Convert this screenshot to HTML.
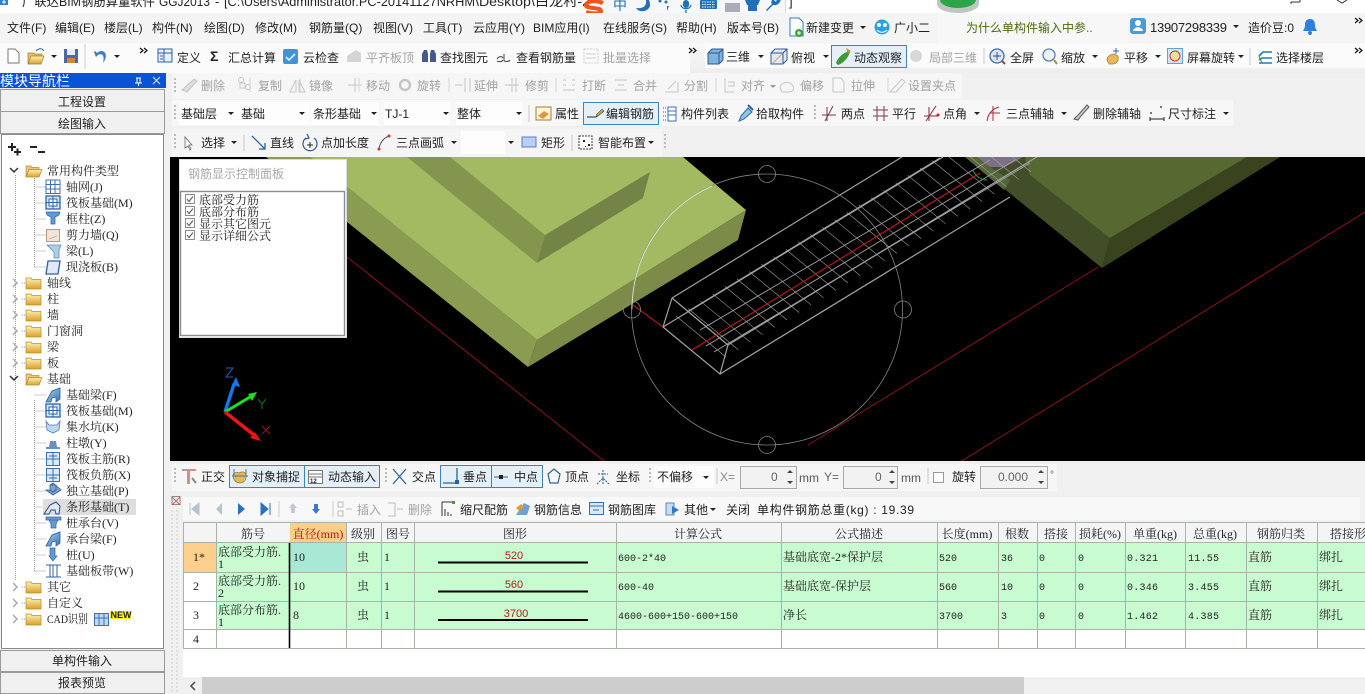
<!DOCTYPE html>
<html lang="zh"><head><meta charset="utf-8"><title>广联达BIM钢筋算量软件</title>
<style>
html,body{margin:0;padding:0;background:#f0f0f0;overflow:hidden}
svg{display:block}
text{font:12px "Liberation Sans","Noto Sans CJK SC",sans-serif;fill:#222}
.g text,text.g{fill:#a2a2a2}
.s text,text.s{font-family:"Liberation Serif","Noto Serif CJK SC",serif}
.c text,text.c{text-anchor:middle}
.m text{font:10px "Liberation Mono","Noto Serif CJK SC",monospace;fill:#222}
</style></head><body>
<svg xmlns="http://www.w3.org/2000/svg" width="1365" height="694" viewBox="0 0 1365 694">
<defs>
<linearGradient id="fy" x1="0" y1="0" x2="0" y2="1"><stop offset="0" stop-color="#fff2b0"/><stop offset="1" stop-color="#d9a030"/></linearGradient>
<linearGradient id="bb" x1="0" y1="0" x2="0" y2="1"><stop offset="0" stop-color="#f8f8f8"/><stop offset="1" stop-color="#eeeeee"/></linearGradient>
<linearGradient id="bl" x1="0" y1="0" x2="1" y2="1"><stop offset="0" stop-color="#a9cdea"/><stop offset="1" stop-color="#3f78b4"/></linearGradient>
<g id="fc"><path d="M0 2h5l1 1.500h9v9.500h-15z" fill="url(#fy)" stroke="#b98a30" stroke-width=".7"/></g>
<g id="fo"><path d="M0 2h5l1 1.500h7v2h-10l-3 7.500z" fill="#e8c878" stroke="#b98a30" stroke-width=".7"/><path d="M3 5.500h13l-3 7.500h-13z" fill="url(#fy)" stroke="#b98a30" stroke-width=".7"/></g>
<path id="ex" d="M0 0l4 4-4 4" fill="none" stroke="#aaa" stroke-width="1.500"/>
<path id="eo" d="M0 0l4 4 4-4" fill="none" stroke="#333" stroke-width="1.500"/>
<path id="dn" d="M0 0h6l-3 3z" fill="#222"/>
<g id="ck"><rect x=".5" y=".5" width="9" height="9" fill="#fff" stroke="#8c8c8c"/><path d="M2 5l2 2.500 4-5" fill="none" stroke="#666" stroke-width="1.200"/></g>
<g id="grid"><path d="M0 0h14M0 4.500h14M0 9h14M0 13.500h14M0 0v14M4.500 0v14M9 0v14M14 0v14" fill="none" stroke="#3f6fb0"/></g>
<g id="raft"><rect x="0" y="0" width="14" height="13" fill="#dbe9f8" stroke="#2f62a8" stroke-width="1.300"/><rect x="3" y="3" width="8" height="7" fill="#fff" stroke="#2f62a8"/><path d="M7 0v13M0 6.500h14" stroke="#2f62a8"/></g>
<g id="beam"><path d="M0 14l6-11 8-3v11l-4 3v-5l-4 1-1 4z" fill="url(#bl)" stroke="#2d5d9f" stroke-width=".8"/></g>
</defs>

<rect width="1365" height="694" fill="#f0f0f0"/>

<!-- 3D VIEW -->
<svg x="170" y="157" width="1195" height="304" viewBox="170 157 1195 304">
<rect x="170" y="157" width="1195" height="304" fill="#000"/>
<g fill="none" stroke="#8c1414" stroke-width="1">
<path d="M347 257L604 461"/><path d="M1098 267L808 445"/><path d="M1365 212L960 462"/>
</g>
<polygon points="310,157 683,157 746,210 537,340 347,187" fill="#a3ba62"/>
<polygon points="266,157 310,157 537,340 528,367" fill="#8a9c52"/>
<polygon points="537,340 746,210 738,240 528,367" fill="#7c8c48"/>
<polygon points="407,157 450,157 545,235 537,263" fill="#84954d"/>
<polygon points="545,235 650,172 643,198 537,263" fill="#748346"/>
<!-- right block -->
<polygon points="965,157 1025,157 1110,238 1102,268" fill="#414e28"/>
<polygon points="1247,157 1280,157 1102,268 1110,238" fill="#39441f"/>
<polygon points="1025,157 1247,157 1110,238 1030,175" fill="#586831"/>
<polygon points="977,157 1023,157 1005,167 990,167" fill="#7d7085"/>
<polygon points="965,157 977,157 990,167 1010,180 1004,190" fill="#55663a"/>
<!-- wireframe -->
<g fill="none" stroke="#a2a2a2">
<path stroke-width="1.200" d="M672 298L902 157M663 327L943 157M720 374L1010 197M728 345L1040 155M687 312L940 158"/>
<path stroke-width="1.200" d="M672 298L663 327L720 374L728 345L672 298"/>
<path stroke-width=".6" d="M676 316l50 41m-37.800-48.400l50 41m-37.800-48.400l50 41m-37.800-48.400l50 41m-37.800-48.400l50 41m-37.800-48.400l50 41m-37.800-48.400l50 41m-37.800-48.400l50 41m-37.800-48.400l50 41m-37.800-48.400l50 41m-37.800-48.400l50 41m-37.800-48.400l50 41m-37.800-48.400l50 41m-37.800-48.400l50 41m-37.800-48.400l50 41m-37.800-48.400l50 41m-37.800-48.400l50 41m-37.800-48.400l50 41m-37.800-48.400l50 41m-37.800-48.400l50 41m-37.800-48.400l50 41m-37.800-48.400l50 41m-37.800-48.400l50 41m-37.800-48.400l50 41m-37.800-48.400l50 41m-37.800-48.400l50 41"/>
<path stroke-width=".9" d="M706 346L1015 160M714 352L1030 163M700 330L990 160"/>
</g>
<path d="M692 350L980 173" stroke="#c81616" stroke-width="1.100" fill="none"/>
<path d="M633 305L663 327" stroke="#d81818" stroke-width="1" fill="none"/>
<path d="M973 170a15 15 0 0 0 14 10" stroke="#1a9a40" fill="none"/>
<!-- circle gizmo -->
<g fill="none" stroke="#858585" stroke-width=".8">
<circle cx="767" cy="309.500" r="135.500"/>
<circle cx="767" cy="174" r="8.500"/><circle cx="767" cy="445" r="8.500"/><circle cx="632" cy="309.500" r="8.500"/><circle cx="903" cy="309.500" r="8.500"/>
</g>
<path d="M632 309A135.500 135.500 0 0 1 712 186" fill="none" stroke="#e8ecd8" stroke-width=".8"/>
<!-- axes -->
<path d="M225 412L234 384" stroke="#1478ec" stroke-width="3.500"/><path d="M236 377l4 10-8-2z" fill="#1478ec"/>
<path d="M225 412L250 397" stroke="#1ce01c" stroke-width="3"/><path d="M257 392l-5 9-4-7z" fill="#1ce01c"/>
<path d="M225 412L254 435" stroke="#ee1414" stroke-width="3.500"/><path d="M261 441l-11-3 5-6z" fill="#ee1414"/>
<path d="M226 368h7l-7 9h7" fill="none" stroke="#2c5cb0"/>
<path d="M258 399l4 5 4-5M262 404v5" fill="none" stroke="#128012"/>
<path d="M262 426l8 8M270 426l-8 8" fill="none" stroke="#902020"/>
</svg>

<!-- title bar -->
<rect x="0" y="0" width="1365" height="13" fill="#fff"/>
<rect x="0" y="0" width="8" height="5" fill="#2a82d8"/><path d="M4 0v4M2 2h4" stroke="#fff"/>
<g style="fill:#333">
<text x="22" y="6" style="font-size:13px" textLength="133" lengthAdjust="spacingAndGlyphs">广联达BIM钢筋算量软件</text>
<text x="159" y="6" style="font-size:13px" textLength="51" lengthAdjust="spacingAndGlyphs">GGJ2013</text>
<text x="215" y="6" style="font-size:13px">-</text>
<text x="224" y="6" style="font-size:13px" textLength="251" lengthAdjust="spacingAndGlyphs">[C:\Users\Administrator.PC-20141127NRHM</text>
<text x="475" y="6" style="font-size:13px" textLength="115" lengthAdjust="spacingAndGlyphs">\Desktop\白龙村-2</text>
</g>
<!-- sogou -->
<rect x="600" y="-1" width="185.500" height="16" fill="#f6f7f8" stroke="#d8d8d8"/>
<text x="789" y="6" style="font-size:13px">]</text>
<path d="M603 3c-7-3-16-2-17 2-1 4 15 2 15 6 0 3-9 3-15 1" fill="none" stroke="#f0551e" stroke-width="4"/>
<g fill="#1f70b8"><text x="613" y="10" style="font-size:14px;fill:#1f70b8">中</text>
<path d="M646 0c1 6-3 9-10 8 3 5 12 4 14-2 0-2 0-4-1-6z"/>
<circle cx="660" cy="1" r="1.500"/><circle cx="666" cy="2" r="1.500"/><path d="M667 6l2 0-2 5z"/>
<rect x="683" y="0" width="6" height="8" rx="3"/><path d="M681 5c1 5 9 5 10 0M686 10v3" fill="none" stroke="#1f70b8" stroke-width="1.300"/>
<rect x="700" y="0" width="17" height="9" rx="1" fill="#1f70b8"/><path d="M702 2h13M702 4.500h13M702 7h13" stroke="#fff" stroke-dasharray="1.500 1"/>
<rect x="725" y="3" width="15" height="9" fill="#a8aeb4"/>
<path d="M745 0h15l-2 5h-1v6h-9v-6h-1z"/>
<path d="M767 11l6-6c3 1 7-1 8-6h-4l-1 3-2-2h-2c-1 2-1 3 0 4l-6 6z"/></g>
<!-- green ball -->
<path d="M937 4a21 9 0 0 0 42 0v-4h-42z" fill="#bfc6bf"/><path d="M940 0a17 7.500 0 0 0 36 0z" fill="#2ea44a"/>
<path d="M1291 2h9M1291 2v2M1300 0v2" stroke="#333" fill="none"/><path d="M1337 0l5 3 5-3" stroke="#333" fill="none"/>

<!-- menu row -->
<rect x="0" y="13" width="1365" height="30" fill="#f4f4f4"/>
<rect x="938" y="13" width="190" height="30" fill="#f7f7f7"/>
<g>
<text x="7" y="32">文件(F)</text><text x="55" y="32">编辑(E)</text><text x="104" y="32">楼层(L)</text><text x="152" y="32">构件(N)</text><text x="204" y="32">绘图(D)</text><text x="255" y="32">修改(M)</text><text x="309" y="32">钢筋量(Q)</text><text x="373" y="32">视图(V)</text><text x="423" y="32">工具(T)</text><text x="473" y="32">云应用(Y)</text><text x="533" y="32">BIM应用(I)</text><text x="603" y="32">在线服务(S)</text><text x="676" y="32">帮助(H)</text><text x="727" y="32">版本号(B)</text><text x="806" y="32">新建变更</text><text x="894" y="32">广小二</text>
<text x="966" y="32" style="fill:#4a6b10">为什么单构件输入中参..</text>
<text x="1150" y="32" style="font-size:13px" textLength="77">13907298339</text><text x="1248" y="32">造价豆:0</text>
</g>
<path d="M790 18h9l4 4v14h-13z" fill="#fff" stroke="#3a78b8"/><circle cx="799" cy="33" r="4" fill="#3aa83a"/><path d="M797 33h4M799 31v4" stroke="#fff"/>
<use href="#dn" x="860" y="26"/>
<circle cx="882" cy="27" r="7.500" fill="#28a0e8"/><circle cx="879" cy="25" r="2" fill="#fff"/><circle cx="885" cy="25" r="2" fill="#fff"/><path d="M877 30c3 3 7 3 10 0" stroke="#fff" fill="none"/>
<rect x="1130" y="18" width="16" height="16" rx="3" fill="#4a9ad4"/><circle cx="1138" cy="23" r="3" fill="#fff"/><path d="M1133 31c1-5 9-5 10 0z" fill="#fff"/>
<use href="#dn" x="1233" y="25"/>
<path d="M1310 19c4 0 5 3 5 6 0 3 1 4 2 6h-14c1-2 2-3 2-6 0-3 1-6 5-6z" fill="#2e80e0"/><circle cx="1310" cy="33" r="2" fill="#2e80e0"/>
<path d="M1355 18l3 2.500-3 2.500M1359 18l3 2.500-3 2.500" fill="none" stroke="#111" stroke-width="1.200"/>

<!-- row 2 -->
<rect x="0" y="43" width="1365" height="30" fill="url(#bb)"/>
<rect x="0" y="44" width="690" height="29" fill="#fbfbfb"/><rect x="705" y="44" width="660" height="24" fill="#fbfbfb"/>
<path d="M8 49h7l4 4v10h-11z" fill="#fff" stroke="#777"/>
<path d="M28 53h6l1 1h7v2h-10l-4 7z" fill="#e6c26c" stroke="#a87a28" stroke-width=".7"/><path d="M31 56h13l-3 8h-13z" fill="url(#fy)" stroke="#a87a28" stroke-width=".7"/><path d="M36 51c3-3 6-3 8 0" stroke="#2a62a8" fill="none"/>
<use href="#dn" x="51" y="55"/>
<rect x="64" y="49" width="14" height="14" fill="#4d66a8"/><rect x="67" y="49" width="8" height="6" fill="#e8edf5"/><rect x="67" y="58" width="8" height="5" fill="#c83" />
<line x1="85" y1="44" x2="85" y2="69" stroke="#ccc"/>
<path d="M94 52l2 5 2-2c4-2 7 0 5 8 4-5 4-11-1-12-2 0-4 1-5 2l-2-2z" fill="#3b7bc8"/>
<use href="#dn" x="114" y="55"/>
<path d="M140 48l3 2.500-3 2.500M144 48l3 2.500-3 2.500" fill="none" stroke="#111" stroke-width="1.200"/>
<rect x="158" y="49" width="14" height="13" fill="#e8f0f8" stroke="#315f9c"/><path d="M158 53h14M164 49v13M160 56h3M160 59h3" stroke="#315f9c"/>
<text x="177" y="62">定义</text>
<text x="210" y="61" style="font-size:14px;font-weight:bold">Σ</text><text x="228" y="62">汇总计算</text>
<rect x="283" y="49" width="15" height="15" rx="2" fill="#3d96dc"/><path d="M286 57l3 3 6-6" stroke="#fff" stroke-width="1.500" fill="none"/><text x="303" y="62">云检查</text>
<path d="M347 62v-6l9-6 5 3v9z" fill="#d4d4d4"/><text x="366" y="62" class="g">平齐板顶</text>
<path d="M422 62v-8l2-4h3l1 4v8zM430 62v-8l1-4h3l2 4v8z" fill="#445a8c"/><text x="440" y="62">查找图元</text>
<path d="M497 59c2-3 5-3 6-1M504 54v6c0 2 5 2 6 0M497 61c2 1 5 1 6-1" stroke="#444" fill="none"/><text x="516" y="62">查看钢筋量</text>
<rect x="584" y="49" width="14" height="14" fill="none" stroke="#ccc" stroke-dasharray="2 1"/><path d="M586 54h10M586 58h10" stroke="#ccc"/><text x="603" y="62" class="g">批量选择</text>
<path d="M689 48l3 2.500-3 2.500M693 48l3 2.500-3 2.500" fill="none" stroke="#111" stroke-width="1.200"/>
<path d="M708 53l4-4h11v11l-4 4h-11z" fill="#7eb2dc" stroke="#2f5c8c"/><path d="M708 53h11v11M719 53l4-4" fill="none" stroke="#2f5c8c"/><text x="726" y="61">三维</text><use href="#dn" x="758" y="55"/>
<path d="M771 53l4-4h12v11l-4 4h-12z" fill="#dde9f4" stroke="#2f5c8c"/><path d="M771 53h12v11M783 53l4-4" fill="none" stroke="#2f5c8c"/><path d="M773 63l9-9" stroke="#e0a060"/><text x="791" y="62">俯视</text><use href="#dn" x="823" y="55"/>
<rect x="831.500" y="45.500" width="75" height="22" fill="#e4eff8" stroke="#3c84b8"/>
<path d="M836 63c2-6 8-11 14-12-1 6-6 12-12 14z" fill="#3f9a34"/><path d="M846 48l5 3-3 2z" fill="#d08a24"/><text x="854" y="62">动态观察</text>
<circle cx="916" cy="56" r="6" fill="#d8d8d8"/><text x="929" y="62" class="g">局部三维</text>
<line x1="984" y1="48" x2="984" y2="64" stroke="#c8c8c8"/>
<circle cx="997" cy="56" r="7" fill="#dbe6f4" stroke="#3d6ba8" stroke-width="1.300"/><path d="M993 56h8M997 52v8" stroke="#284f88"/><path d="M1002 61l3 3" stroke="#b03a2a" stroke-width="2"/><text x="1010" y="62">全屏</text>
<circle cx="1049" cy="55" r="6" fill="#eef3f8" stroke="#5b7fa8" stroke-width="1.300"/><path d="M1054 60l3 4" stroke="#b58a34" stroke-width="2"/><text x="1061" y="62">缩放</text><use href="#dn" x="1092" y="55"/>
<path d="M1107 60c0-4 4-6 7-6l4 2c1 4-1 8-5 8h-4z" fill="#e8b85c" stroke="#a47a2c" stroke-width=".7"/><path d="M1116 48v6M1113 51h6" stroke="#3a62a8"/><text x="1124" y="62">平移</text><use href="#dn" x="1155" y="55"/>
<rect x="1167.500" y="48.500" width="15" height="15" fill="#cfe6f4" stroke="#6aa0c8"/><circle cx="1175" cy="56" r="5" fill="#e8e0a0" stroke="#cc3a2c"/><text x="1187" y="62">屏幕旋转</text><use href="#dn" x="1238" y="55"/>
<line x1="1250" y1="48" x2="1250" y2="65" stroke="#c8c8c8"/>
<path d="M1259 56l4-4h9M1259 60l3-2h10M1259 63h13" fill="none" stroke="#1f7fb0" stroke-width="1.600"/><path d="M1259 56l3 7" stroke="#3a9a38"/><text x="1276" y="62">选择楼层</text>
<path d="M1355 48l3 2.500-3 2.500M1359 48l3 2.500-3 2.500" fill="none" stroke="#111" stroke-width="1.200"/>

<!-- row 3 (disabled) -->
<rect x="170" y="73" width="1195" height="84" fill="#f0f0f0"/>
<rect x="172" y="73" width="790" height="26" fill="#f6f6f6"/>
<line x1="175" y1="78" x2="175" y2="94" stroke="#bbb" stroke-width="2" stroke-dasharray="2 2"/>
<g class="g">
<text x="201" y="90">删除</text><text x="258" y="90">复制</text><text x="309" y="90">镜像</text><text x="366" y="90">移动</text><text x="417" y="90">旋转</text><text x="474" y="90">延伸</text><text x="525" y="90">修剪</text><text x="582" y="90">打断</text><text x="633" y="90">合并</text><text x="684" y="90">分割</text><text x="741" y="90">对齐</text><text x="800" y="90">偏移</text><text x="851" y="90">拉伸</text><text x="908" y="90">设置夹点</text>
</g>
<g fill="none" stroke="#c6c6c6">
<path d="M182 90l12-11 3 2-10 11z" fill="#ddd"/>
<circle cx="241" cy="80" r="2.500"/><circle cx="248" cy="87" r="2.500"/><rect x="240" y="83" width="5" height="5"/>
<path d="M290 92l6-12v12zM299 92v-12l6 12z"/>
<path d="M348 85h14M355 78v14"/>
<circle cx="405" cy="85" r="5" stroke-width="2.500"/>
<path d="M455 85h8M465 78v14M470 78v14"/>
<path d="M505 85h14M512 78v14M516 78v14"/>
<path d="M563 80h3M572 80h3M563 90h12M563 85h3M572 85h3"/>
<path d="M615 80h12M615 90h12M618 85h6"/>
<path d="M665 92h13v-10M668 89l8-8"/>
<path d="M725 78v14h9M728 82h6v4h-6"/>
<path d="M780 88c0-6 10-8 13-2 2 4-1 6-5 6h-6z"/>
<path d="M833 78h8l3 4v10h-11z"/>
<path d="M890 92l12-13 3 3-9 10z"/>
<path d="M216 78v14M250 78v14M300 78v14M359 78v14M449 78v14M556 78v14M716 78v14M888 78v14" stroke="#d4d4d4"/>
</g>
<path d="M770 85h6l-3 3z" fill="#999"/>

<!-- row 4 -->
<rect x="172" y="100" width="1061" height="26" fill="#f7f7f7"/>
<rect x="179" y="102" width="62" height="23" fill="#fdfdfd"/><rect x="240" y="102" width="70" height="23" fill="#fdfdfd"/><rect x="311" y="102" width="68" height="23" fill="#fdfdfd"/><rect x="384" y="102" width="66" height="23" fill="#fdfdfd"/><rect x="456" y="102" width="66" height="23" fill="#fdfdfd"/>
<line x1="175" y1="105" x2="175" y2="121" stroke="#bbb" stroke-width="2" stroke-dasharray="2 2"/>
<text x="181" y="118">基础层</text><use href="#dn" x="228" y="112"/><text x="241" y="118">基础</text><use href="#dn" x="299" y="112"/><text x="313" y="118">条形基础</text><use href="#dn" x="371" y="112"/><text x="385" y="118">TJ-1</text><use href="#dn" x="443" y="112"/><text x="457" y="118">整体</text><use href="#dn" x="516" y="112"/>
<line x1="529" y1="105" x2="529" y2="122" stroke="#c8c8c8"/>
<rect x="536" y="107" width="15" height="13" fill="#fff4d8" stroke="#a87a2c"/><path d="M538 116l6-5 5 3-6 5z" fill="#d89c3c"/><text x="555" y="118">属性</text>
<rect x="583.500" y="102.500" width="75" height="22" fill="#e4eff8" stroke="#3c84b8"/>
<path d="M587 117h9l8-6" stroke="#222" fill="none"/><path d="M596 115l6-6 2 2-6 5z" fill="#c8a040" stroke="#333" stroke-width=".5"/><text x="606" y="118">编辑钢筋</text>
<path d="M663 108h3M663 112h3M663 116h3M663 120h3" stroke="#456" stroke-dasharray="1 1" /><rect x="668" y="107" width="8" height="14" fill="#fff" stroke="#3f6fa8"/><path d="M668 111h8M668 115h8" stroke="#3f6fa8"/><text x="681" y="118">构件列表</text>
<path d="M739 121l2-5 7-8 4 4-8 7z" fill="#8cc4ec" stroke="#2a62a0"/><path d="M748 105l5 5" stroke="#2a62a0" stroke-width="2"/><text x="756" y="118">拾取构件</text>
<line x1="815" y1="105" x2="815" y2="121" stroke="#bbb" stroke-width="2" stroke-dasharray="2 2"/>
<g fill="none" stroke="#7c3a4a"><path d="M822 115h14M827 107v14M833 106l-8 15"/></g><text x="841" y="118">两点</text>
<g fill="none" stroke="#7c3a4a"><path d="M873 110h15M873 116h15M877 106v15M884 106v15"/></g><text x="892" y="118">平行</text>
<g fill="none" stroke="#8c2a3c"><path d="M924 116h14M929 107v14M936 106l-10 15"/></g><circle cx="938" cy="115" r="1.500" fill="#c22"/><text x="943" y="118">点角</text><use href="#dn" x="974" y="112"/>
<path d="M987 121c1-7 5-12 12-14M993 106v15M990 113h10" fill="none" stroke="#a82a3c"/><text x="1006" y="118">三点辅轴</text><use href="#dn" x="1061" y="112"/>
<path d="M1074 119l5-5 8-9 2 2-8 9-3 4z" fill="#d8c8a0" stroke="#4a5a90"/><text x="1093" y="118">删除辅轴</text>
<path d="M1150 119h14M1150 117v4M1164 117v4" stroke="#222" fill="none"/><rect x="1160" y="106" width="2" height="2" fill="#4a9a3c"/><rect x="1150" y="112" width="2" height="2" fill="#4a9a3c"/><text x="1168" y="118">尺寸标注</text><use href="#dn" x="1223" y="112"/>

<!-- row 5 -->
<rect x="172" y="129" width="490" height="28" fill="#f5f5f5"/>
<line x1="175" y1="134" x2="175" y2="150" stroke="#bbb" stroke-width="2" stroke-dasharray="2 2"/>
<path d="M185 137v11l3-2 2 4 1-1-2-4h3z" fill="#fff" stroke="#666" stroke-width=".8"/><text x="201" y="147">选择</text><use href="#dn" x="231" y="141"/>
<line x1="244" y1="135" x2="244" y2="151" stroke="#c8c8c8"/>
<path d="M252 136l13 13M265 143v6h-6" stroke="#2a62a0" fill="none" stroke-width="1.300"/><text x="270" y="147">直线</text>
<path d="M306 138a7 7 0 1 0 8 0M307 134l2 4-4 1" fill="none" stroke="#2a5a98" stroke-width="1.200"/><path d="M310 142v6M307 145h6" stroke="#222"/><text x="321" y="147">点加长度</text>
<path d="M379 149c1-7 5-11 10-13" stroke="#555" fill="none"/><circle cx="379" cy="149" r="1.500" fill="#c33"/><circle cx="389" cy="136" r="1.500" fill="#c33"/><text x="396" y="147">三点画弧</text><use href="#dn" x="451" y="141"/>
<rect x="461" y="131" width="44" height="23" fill="#fdfdfd"/><use href="#dn" x="508" y="141"/>
<rect x="522" y="137" width="14" height="10" fill="#b8cef4" stroke="#5a80b8"/><text x="541" y="147">矩形</text>
<line x1="572" y1="135" x2="572" y2="151" stroke="#c8c8c8"/>
<rect x="579" y="136" width="13" height="13" fill="#fff" stroke="#333" stroke-dasharray="2 1"/><path d="M583 140h2v2h-2zM588 144h2v2h-2zM585 146h1v1h-1z" fill="#222"/><text x="598" y="147">智能布置</text><use href="#dn" x="648" y="141"/>
<line x1="665" y1="134" x2="665" y2="150" stroke="#bbb" stroke-width="2" stroke-dasharray="2 2"/>

<!-- left panel -->
<rect x="0" y="73" width="166" height="15" fill="#0a53d6"/>
<text x="0" y="86" style="font-size:14px;fill:#fff">模块导航栏</text>
<path d="M136 78h5M137 78v5h3v-5M135 83h7M138.500 83v3" stroke="#fff" fill="none"/><path d="M153 77l7 7M160 77l-7 7" stroke="#dfe8ff"/>
<rect x="0.500" y="89.500" width="164" height="22" fill="#f0f0f0" stroke="#9a9a9a"/>
<rect x="0.500" y="111.500" width="164" height="22" fill="#f0f0f0" stroke="#9a9a9a"/>
<text x="82" y="106" class="c">工程设置</text><text x="82" y="128" class="c">绘图输入</text>
<rect x="1.500" y="134.500" width="162" height="514" fill="#fff" stroke="#8a8a8a"/>
<path d="M8 147h8M12 143v8M14 152h7M17.500 148.500v7" stroke="#222" stroke-width="2" fill="none"/><path d="M30 147h7M38 152h7" stroke="#222" stroke-width="2" fill="none"/>
<!-- tree lines -->
<g fill="none" stroke="#999" stroke-dasharray="1 1">
<path d="M15.500 175V580M34.500 178V267H46M34.500 187H46M34.500 203H46M34.500 219H46M34.500 235H46M34.500 251H46M34.500 400V571H46M34.500 395H46M34.500 411H46M34.500 427H46M34.500 443H46M34.500 459H46M34.500 475H46M34.500 491H46M34.500 507H46M34.500 523H46M34.500 539H46M34.500 555H46"/>
<path d="M22 283h4M22 299h4M22 315h4M22 331h4M22 347h4M22 363h4M22 587h4M22 603h4M22 619h4"/>
</g>
<rect x="43" y="499" width="93" height="16" fill="#dedede"/>
<!-- expanders & folders -->
<use href="#eo" x="10" y="168"/><use href="#fo" x="26" y="164"/>
<use href="#ex" x="13" y="279"/><use href="#fc" x="26" y="276"/>
<use href="#ex" x="13" y="295"/><use href="#fc" x="26" y="292"/>
<use href="#ex" x="13" y="311"/><use href="#fc" x="26" y="308"/>
<use href="#ex" x="13" y="327"/><use href="#fc" x="26" y="324"/>
<use href="#ex" x="13" y="343"/><use href="#fc" x="26" y="340"/>
<use href="#ex" x="13" y="359"/><use href="#fc" x="26" y="356"/>
<use href="#eo" x="10" y="376"/><use href="#fo" x="26" y="372"/>
<use href="#ex" x="13" y="583"/><use href="#fc" x="26" y="580"/>
<use href="#ex" x="13" y="599"/><use href="#fc" x="26" y="596"/>
<use href="#ex" x="13" y="615"/><use href="#fc" x="26" y="612"/>
<!-- tree icons -->
<use href="#grid" x="46" y="180"/>
<use href="#raft" x="46" y="196"/>
<path d="M46 212h14l-1 3-4 2v7h-4v-7l-4-2z" fill="#5f9ad4" stroke="#2f62a8" stroke-width=".7"/>
<rect x="46.500" y="229.500" width="13" height="12" fill="#f4e4d8" stroke="#c09878"/><path d="M49 239l8-3" stroke="#bbb"/>
<path d="M47 245h14l-2 5v8h-5v-6z" fill="#a8d0ec" stroke="#5a90c4" stroke-width=".8"/>
<path d="M48 261h12l-2 13h-12z" fill="#e0eaf6" stroke="#2f62a8" stroke-width="1.300"/>
<use href="#beam" x="46" y="388"/>
<use href="#raft" x="46" y="404"/>
<path d="M46 421l3 4h8l3-4-1 9-6 3-6-3z" fill="#bcd8f0" stroke="#4a80b8" stroke-width=".8"/>
<path d="M46 447h14v2h-14zM50 441h6l1 6h-8z" fill="#6a8fc0"/>
<rect x="46.500" y="452.500" width="13" height="13" fill="#dbe9f8" stroke="#3a6fb0"/><path d="M53 453v12M47 459h12M49 456h8" stroke="#3a6fb0"/>
<rect x="46.500" y="468.500" width="13" height="13" fill="#dbe9f8" stroke="#3a6fb0"/><path d="M53 469v12M47 475h12M49 478h8" stroke="#3a6fb0"/>
<path d="M46 490l7 5 8-5-8-7-3 2v5zM50 485v5l3 2 3-2v-5z" fill="#7aa4d4" stroke="#2f5a98" stroke-width=".8"/>
<path d="M44 514l6-9 6-3 4 4-1 8h-3l-1-4h-4l-2 4z" fill="#dfe8f4" stroke="#2a4a80" stroke-width="1"/>
<path d="M46 517h15v3h-15zM49 520h9l-2 4v4h-5v-4z" fill="#6a9ad0" stroke="#2f62a8" stroke-width=".7"/>
<use href="#beam" x="46" y="532"/>
<path d="M50 548h5v8l2 0-4 5-4-5h1z" fill="#5f9ad4" stroke="#2f62a8" stroke-width=".7"/>
<path d="M46 565h15M46 577h15M50 565v12M53 565v12M57 565v12" stroke="#2f62a8" fill="none"/>
<rect x="94.500" y="613.500" width="14" height="12" fill="#bcd8f4" stroke="#3f6fb0"/><path d="M99 614v11M104 614v11M95 618h13" stroke="#3f6fb0"/>
<rect x="110" y="611" width="21" height="8" fill="#f6f000" opacity=".85"/><text x="110.500" y="618" style="font-size:9px;font-weight:bold;fill:#222">NEW</text>
<g class="s">
<text x="47" y="175">常用构件类型</text>
<text x="66" y="191">轴网(J)</text><text x="66" y="207">筏板基础(M)</text><text x="66" y="223">框柱(Z)</text><text x="66" y="239">剪力墙(Q)</text><text x="66" y="255">梁(L)</text><text x="66" y="271">现浇板(B)</text>
<text x="47" y="287">轴线</text><text x="47" y="303">柱</text><text x="47" y="319">墙</text><text x="47" y="335">门窗洞</text><text x="47" y="351">梁</text><text x="47" y="367">板</text><text x="47" y="383">基础</text>
<text x="66" y="399">基础梁(F)</text><text x="66" y="415">筏板基础(M)</text><text x="66" y="431">集水坑(K)</text><text x="66" y="447">柱墩(Y)</text><text x="66" y="463">筏板主筋(R)</text><text x="66" y="479">筏板负筋(X)</text><text x="66" y="495">独立基础(P)</text><text x="66" y="511">条形基础(T)</text><text x="66" y="527">桩承台(V)</text><text x="66" y="543">承台梁(F)</text><text x="66" y="559">桩(U)</text><text x="66" y="575">基础板带(W)</text>
<text x="47" y="591">其它</text><text x="47" y="607">自定义</text><text x="47" y="623" textLength="41" lengthAdjust="spacingAndGlyphs">CAD识别</text>
</g>
<rect x="0.500" y="650.500" width="164" height="21" fill="#f0f0f0" stroke="#9a9a9a"/>
<rect x="0.500" y="672.500" width="164" height="21" fill="#f0f0f0" stroke="#9a9a9a"/>
<text x="82" y="665" class="c">单构件输入</text><text x="82" y="687" class="c">报表预览</text>

<!-- rebar control panel -->
<rect x="179.500" y="159.500" width="167" height="178" fill="#fff" stroke="#dcdcdc"/>
<text x="188" y="178" style="fill:#a8a8a8">钢筋显示控制面板</text>
<rect x="180.500" y="191.500" width="164" height="144" fill="#fff" stroke="#8c8c8c" stroke-width="1.400"/>
<use href="#ck" x="185" y="194"/><use href="#ck" x="185" y="206"/><use href="#ck" x="185" y="218"/><use href="#ck" x="185" y="230"/>
<g class="s"><text x="199" y="204">底部受力筋</text><text x="199" y="216">底部分布筋</text><text x="199" y="228">显示其它图元</text><text x="199" y="240">显示详细公式</text></g>

<!-- snap toolbar -->
<rect x="170" y="461" width="1195" height="30" fill="#f0f0f0"/>
<rect x="172" y="464" width="885" height="27" fill="#f6f6f6"/>
<line x1="175" y1="468" x2="175" y2="484" stroke="#bbb" stroke-width="2" stroke-dasharray="2 2"/>
<path d="M182 469h14v2h-6v13h-3v-13h-5z" fill="#d09088"/><path d="M192 478l4 5" stroke="#888" stroke-width="2"/>
<text x="201" y="481">正交</text>
<rect x="229.500" y="465.500" width="75" height="22" fill="#e4eff8" stroke="#3c84b8"/><rect x="304.500" y="465.500" width="75" height="22" fill="#e4eff8" stroke="#3c84b8"/>
<path d="M233 475c1-3 4-3 6-2 3-2 6-1 7 1 1 4-1 9-6 9-4 0-7-3-7-8z" fill="#e4b858" stroke="#8a6a2c" stroke-width=".6"/><path d="M234 469v6M246 469v6M232 476h16" stroke="#3a78a8" fill="none"/><text x="252" y="481">对象捕捉</text>
<rect x="308.500" y="470.500" width="14" height="13" fill="#fff" stroke="#777"/><path d="M309 474h13M309 477h13" stroke="#777"/><text x="310" y="483" style="font-size:6px;font-weight:bold">12</text><text x="328" y="481">动态输入</text>
<line x1="386" y1="468" x2="386" y2="484" stroke="#bbb" stroke-width="2" stroke-dasharray="2 2"/>
<path d="M393 469l13 15M406 469l-13 15" stroke="#2a62a0" stroke-width="1.300" fill="none"/><text x="412" y="481">交点</text>
<rect x="440.500" y="465.500" width="51" height="22" fill="#e4eff8" stroke="#3c84b8"/><rect x="491.500" y="465.500" width="51" height="22" fill="#e4eff8" stroke="#3c84b8"/>
<path d="M443 483h15M457 468v15" stroke="#2a62a0" stroke-width="1.300"/><rect x="455" y="480" width="4" height="4" fill="#2a62a0"/><text x="463" y="481">垂点</text>
<path d="M494 477h14" stroke="#2a62a0"/><rect x="499" y="475" width="4" height="4" fill="#222"/><text x="514" y="481">中点</text>
<path d="M554 469l6 5-2 9h-8l-2-9z" fill="none" stroke="#2a62a0" stroke-width="1.200"/><text x="565" y="481">顶点</text>
<path d="M603 470v14M597 484l6-6 6 6M598 474l10 0" stroke="#2a62a0" stroke-dasharray="2 1" fill="none"/><text x="616" y="481">坐标</text>
<line x1="650" y1="468" x2="650" y2="484" stroke="#bbb" stroke-width="2" stroke-dasharray="2 2"/>
<rect x="654" y="466" width="60" height="22" fill="#fdfdfd"/>
<text x="657" y="481">不偏移</text><use href="#dn" x="703" y="476"/>
<line x1="717" y1="468" x2="717" y2="484" stroke="#c8c8c8"/>
<text x="720" y="481" style="fill:#888">X=</text>
<rect x="740.500" y="466.500" width="56" height="22" fill="#f2f2f2" stroke="#a8a8a8"/><text x="771" y="481" style="fill:#666">0</text>
<text x="799" y="482" style="fill:#555">mm</text><text x="824" y="481" style="fill:#666">Y=</text>
<rect x="843.500" y="466.500" width="54" height="22" fill="#f2f2f2" stroke="#a8a8a8"/><text x="875" y="481" style="fill:#666">0</text>
<text x="901" y="482" style="fill:#555">mm</text><line x1="928" y1="468" x2="928" y2="484" stroke="#c8c8c8"/>
<rect x="933.500" y="472.500" width="10" height="10" fill="#fff" stroke="#999"/><text x="952" y="481">旋转</text>
<rect x="980.500" y="466.500" width="67" height="22" fill="#f2f2f2" stroke="#a8a8a8"/><text x="998" y="481" style="fill:#666">0.000</text><text x="1050" y="478" style="fill:#555;font-size:10px">°</text>
<path d="M787 473l3-3 3 3zM787 481l3 3 3-3zM889 473l3-3 3 3zM889 481l3 3 3-3zM1038 473l3-3 3 3zM1038 481l3 3 3-3z" fill="#444"/>

<!-- lower area -->
<rect x="170" y="491" width="1195" height="203" fill="#f0f0f0"/>
<rect x="183" y="497" width="1177" height="23" fill="#f8f8f8"/>
<rect x="172" y="496.500" width="8" height="8" fill="#e8e8e8" stroke="#888"/><path d="M172 497l8 8M180 497l-8 8" stroke="#c44" stroke-width=".8"/>
<path d="M172 510V694M177 510V694" stroke="#dedede" stroke-width="2" stroke-dasharray="2 2"/>
<!-- nav toolbar -->
<path d="M190 503v12M199 503l-7 6 7 6z" fill="#b8c2cc" stroke="#b8c2cc"/>
<path d="M222 503l-6 6 6 6z" fill="#b8c2cc"/>
<path d="M238 503l7 6-7 6z" fill="#2d6fc0"/>
<path d="M261 503l7 6-7 6zM270 503v12" fill="#2d6fc0" stroke="#2d6fc0"/>
<line x1="279" y1="501" x2="279" y2="517" stroke="#ccc"/>
<path d="M293 503l4 5h-2v5h-4v-5h-2z" fill="#c0c8d0"/><path d="M316 514l4-5h-2v-5h-4v5h-2z" fill="#3d78c8"/>
<line x1="333" y1="501" x2="333" y2="517" stroke="#ccc"/>
<path d="M338 502h5v5h-5zM338 511h5v5h-5zM346 509h6" fill="none" stroke="#bbb"/><text x="357" y="514" class="g">插入</text>
<path d="M388 503h7v13h-7M397 509h6" fill="none" stroke="#bbb"/><text x="408" y="514" class="g">删除</text>
<path d="M442 502h10M442 502v14M445 516v-7M448 516v-4M451 516v-2" fill="none" stroke="#333"/><rect x="452" y="501" width="3" height="3" fill="#4a9a3c"/><text x="460" y="514">缩尺配筋</text>
<path d="M516 515l8-12 6 3-3 9z" fill="#6ea0d0"/><path d="M516 508l5-4 3 3-5 4z" fill="#e0a030"/><text x="534" y="514">钢筋信息</text>
<rect x="589.500" y="502.500" width="14" height="12" fill="#d8e8f8" stroke="#3a6fa8"/><path d="M590 506h13M593 510h6" stroke="#3a6fa8"/><text x="608" y="514">钢筋图库</text>
<rect x="666" y="503" width="8" height="12" fill="#c8dcf0" stroke="#5a8ac0"/><path d="M672 506l7 4-7 4z" fill="#2f78c8"/><text x="684" y="514">其他</text><use href="#dn" x="710" y="508"/>
<text x="726" y="514">关闭</text><line x1="747" y1="501" x2="747" y2="517" stroke="#ccc"/>
<text x="757" y="514" textLength="157">单构件钢筋总重(kg) : 19.39</text>

<!-- table -->
<rect x="183" y="522" width="1182" height="155" fill="#fff"/>
<rect x="183" y="523" width="1182" height="19" fill="#f4f4f4"/>
<rect x="216" y="542" width="1149" height="87" fill="#c8fcd0"/>
<rect x="290" y="523" width="56" height="19" fill="#fbcf86"/>
<rect x="184" y="542" width="32" height="30" fill="#fdcf8c"/>
<rect x="290" y="542" width="56" height="30" fill="#aae8d6"/>
<g fill="none" stroke="#a8b4a8">
<path d="M183 522.500H1365M183 542.500H1365M183 572.500H1365M183 601.500H1365M183 629.500H1365M183 648.500H1365"/>
<path d="M183.500 522V649M216.500 522V649M346.500 522V649M381.500 522V649M414.500 522V649M616.500 522V649M781.500 522V649M937.500 522V649M998.500 522V649M1037.500 522V649M1075.500 522V649M1125.500 522V649M1185.500 522V649M1246.500 522V649M1317.500 522V649"/>
</g>
<line x1="289.500" y1="543" x2="289.500" y2="648" stroke="#000" stroke-width="1.600"/>
<g class="s c">
<text x="253" y="538">筋号</text>
<text x="318" y="538" style="fill:#a81c1c">直径(mm)</text>
<text x="363" y="538">级别</text><text x="398" y="538">图号</text><text x="515" y="538">图形</text><text x="698" y="538">计算公式</text><text x="859" y="538">公式描述</text><text x="967" y="538">长度(mm)</text><text x="1017" y="538">根数</text><text x="1056" y="538">搭接</text><text x="1100" y="538">损耗(%)</text><text x="1155" y="538">单重(kg)</text><text x="1215" y="538">总重(kg)</text><text x="1281" y="538">钢筋归类</text>
<text x="1354" y="538">搭接形式</text>
<text x="199" y="561">1*</text><text x="196" y="590">2</text><text x="196" y="619">3</text><text x="196" y="643">4</text>
<text x="363" y="561">虫</text><text x="363" y="590">虫</text><text x="363" y="619">虫</text>
</g>
<g class="s">
<text x="218" y="556">底部受力筋.</text><text x="218" y="568">1</text>
<text x="218" y="585">底部受力筋.</text><text x="218" y="597">2</text>
<text x="218" y="614">底部分布筋.</text><text x="218" y="626">1</text>
<text x="293" y="561">10</text><text x="293" y="590">10</text><text x="293" y="619">8</text>
<text x="384" y="561">1</text><text x="384" y="590">1</text><text x="384" y="619">1</text>
<text x="783" y="561">基础底宽-2*保护层</text><text x="783" y="590">基础底宽-保护层</text><text x="783" y="619">净长</text>
<text x="1248" y="561">直筋</text><text x="1248" y="590">直筋</text><text x="1248" y="619">直筋</text>
<text x="1319" y="561">绑扎</text><text x="1319" y="590">绑扎</text><text x="1319" y="619">绑扎</text>
</g>
<g class="c"><text x="514" y="559" style="font-size:11px;fill:#b01c1c">520</text><text x="514" y="588" style="font-size:11px;fill:#b01c1c">560</text><text x="516" y="617" style="font-size:11px;fill:#b01c1c">3700</text></g>
<path d="M438 562.500H588M438 591.500H588M438 620H588" stroke="#000" stroke-width="2"/>
<g class="m">
<text x="618" y="561">600-2*40</text><text x="618" y="590">600-40</text><text x="618" y="619">4600-600+150-600+150</text>
<text x="939" y="561">520</text><text x="939" y="590">560</text><text x="939" y="619">3700</text>
<text x="1001" y="561">36</text><text x="1001" y="590">10</text><text x="1001" y="619">3</text>
<text x="1039" y="561">0</text><text x="1039" y="590">0</text><text x="1039" y="619">0</text>
<text x="1078" y="561">0</text><text x="1078" y="590">0</text><text x="1078" y="619">0</text>
<text x="1127" y="561" textLength="31">0.321</text><text x="1127" y="590" textLength="31">0.346</text><text x="1127" y="619" textLength="31">1.462</text>
<text x="1188" y="561" textLength="31">11.55</text><text x="1188" y="590" textLength="31">3.455</text><text x="1188" y="619" textLength="31">4.385</text>
</g>
<!-- scrollbar -->
<rect x="183" y="677" width="1182" height="17" fill="#f0f0f0"/>
<rect x="202" y="677" width="822" height="17" fill="#cdcdcd"/>
<path d="M195 682l-4 4 4 4" fill="none" stroke="#444" stroke-width="1.500"/>
</svg>
</body></html>
